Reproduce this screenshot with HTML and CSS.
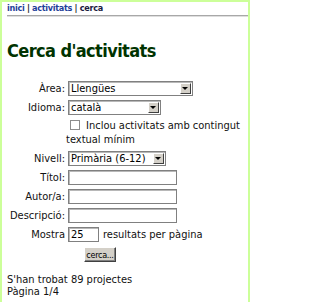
FILE: index.html
```html
<!DOCTYPE html>
<html lang="ca">
<head>
<meta charset="utf-8">
<title>Cerca d'activitats</title>
<link rel="stylesheet" href="styles.css">
</head>
<body>
<div class="crumbs"><a href="#">inici</a> | <a href="#">activitats</a> | <span class="here">cerca</span></div>
<h1 class="title">Cerca d'activitats</h1>
<form class="form">
  <label class="lbl">Àrea:</label>
  <span class="sel sel-area"><select><option>Llengües</option></select><span class="arr"></span></span>

  <label class="lbl">Idioma:</label>
  <span class="sel sel-idioma"><select><option>català</option></select><span class="arr"></span></span>

  <span class="lbl"></span>
  <label class="check"><input type="checkbox" class="cb">Inclou activitats amb contingut textual mínim</label>

  <label class="lbl">Nivell:</label>
  <span class="sel sel-nivell"><select><option>Primària (6-12)</option></select><span class="arr"></span></span>

  <label class="lbl">Títol:</label>
  <input type="text" class="txt">

  <label class="lbl">Autor/a:</label>
  <input type="text" class="txt">

  <label class="lbl">Descripció:</label>
  <input type="text" class="txt">

  <label class="lbl">Mostra</label>
  <div class="mostra"><input type="text" class="num" value="25">resultats per pàgina</div>

  <span class="lbl"></span>
  <div class="btnrow"><button type="button" class="btn">cerca...</button></div>
</form>
<p class="result">S'han trobat 89 projectes<br>Pàgina 1/4</p>
</body>
</html>
```

FILE: styles.css
```css
html { background: #fff; }
body {
  margin: 0;
  width: 241px;
  min-height: 300px;
  border: 2px solid #ccff99;
  border-bottom: 0;
  padding: 0 0 0 5px;
  font-family: "DejaVu Sans Condensed", "DejaVu Sans", sans-serif;
  font-size: 11px;
  color: #111;
  background: #fff;
}
.crumbs {
  font-size: 9px;
  font-weight: bold;
  line-height: 13px;
  letter-spacing: -0.3px;
  color: #222;
  border-bottom: 1px solid #a8a8a8;
  box-shadow: 0 1px 0 #dedede;
}
.crumbs a { color: #1f3f99; text-decoration: none; }
.crumbs .here { color: #1a1a40; }
.title {
  margin: 24px 0 19px;
  font-size: 18px;
  line-height: 22px;
  letter-spacing: -0.6px;
  font-weight: bold;
  color: #003300;
}
.form {
  display: grid;
  grid-template-columns: 58px 177px;
  column-gap: 3px;
  row-gap: 4px;
  align-items: center;
}
.lbl { text-align: right; line-height: 15px; white-space: nowrap; }
.sel { position: relative; display: block; height: 15px; }
.sel-area { width: 125px; }
.sel-idioma { width: 93px; }
.sel-nivell { width: 98px; }
.sel select {
  -webkit-appearance: none;
  appearance: none;
  box-sizing: border-box;
  display: block;
  width: 100%;
  height: 15px;
  margin: 0;
  padding: 0 0 0 2px;
  border: 1px solid #808080;
  border-radius: 0;
  box-shadow: inset 1px 1px 0 #b8b8b8;
  background: #fff;
  color: #000;
  font-family: inherit;
  font-size: 11px;
  line-height: 13px;
}
.arr {
  position: absolute;
  top: 2px;
  right: 2px;
  bottom: 2px;
  width: 11px;
  box-sizing: border-box;
  background: #d4d0c8;
  border: 1px solid;
  border-color: #fff #404040 #404040 #fff;
}
.arr::after {
  content: "";
  position: absolute;
  left: 1px;
  top: 3px;
  border-left: 3px solid transparent;
  border-right: 3px solid transparent;
  border-top: 3px solid #000;
}
.check {
  display: block;
  margin-left: -2px;
  line-height: 14px;
}
.cb {
  -webkit-appearance: none;
  appearance: none;
  box-sizing: border-box;
  width: 10px;
  height: 10px;
  margin: 0 6px 0 4px;
  border: 1px solid #8c8c8c;
  background: #fff;
  vertical-align: -1px;
}
.txt, .num {
  box-sizing: border-box;
  height: 15px;
  margin: 0;
  padding: 0 2px;
  border: 1px solid #808080;
  border-radius: 0;
  box-shadow: inset 1px 1px 0 #b8b8b8;
  background: #fff;
  color: #000;
  font-family: inherit;
  font-size: 11px;
}
.txt { width: 109px; }
.mostra { display: flex; align-items: center; gap: 4px; line-height: 15px; }
.num { width: 31px; }
.btnrow { padding-left: 16px; padding-top: 1px; }
.btn {
  box-sizing: border-box;
  display: block;
  width: 32px;
  height: 15px;
  margin: 0;
  padding: 0;
  background: #d4d0c8;
  border: 1px solid;
  border-color: #fff #404040 #404040 #fff;
  border-radius: 0;
  box-shadow: inset -1px -1px 0 #808080;
  font-family: inherit;
  font-size: 9px;
  letter-spacing: -0.3px;
  color: #000;
  line-height: 12px;
}
.result {
  margin: 12px 0 0;
  line-height: 12px;
}
```
